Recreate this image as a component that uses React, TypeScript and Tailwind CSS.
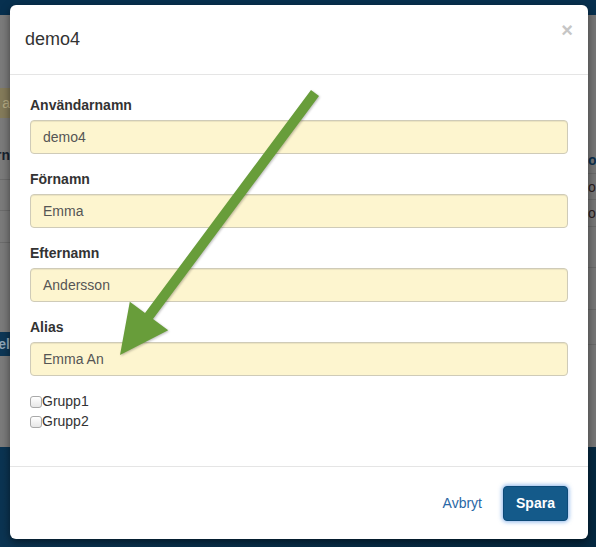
import React from 'react';

interface Field {
  label: string;
  value: string;
}

const fields: Field[] = [
  { label: 'Användarnamn', value: 'demo4' },
  { label: 'Förnamn', value: 'Emma' },
  { label: 'Efternamn', value: 'Andersson' },
  { label: 'Alias', value: 'Emma An' },
];

const groups = ['Grupp1', 'Grupp2'];

const Backdrop: React.FC = () => (
  <div className="flex flex-col h-full">
    <div className="h-[15px] bg-[#07304f]" />
    <div className="h-[432px] bg-[#7b7b7b] flex justify-between">
      {/* left edge of the page behind the modal */}
      <div className="w-[10px] overflow-hidden flex flex-col text-[14px] leading-[20px]">
        <div className="h-[73px]" />
        <div className="h-[30px] bg-[#847b5a] flex items-center justify-end text-[#b8ad84]">a</div>
        <div className="h-[62px] pt-[27px] flex justify-end font-bold text-[#17222e] border-b border-[#6c6c6c]">rn</div>
        <div className="h-[31px] border-b border-[#6c6c6c]" />
        <div className="h-[32px] border-b border-[#6c6c6c]" />
        <div className="h-[89px]" />
        <div className="h-[24px] bg-[#0d3756] flex items-center justify-end font-bold text-[#8fa6b8]">el</div>
      </div>
      {/* right edge */}
      <div className="w-[8px] overflow-hidden flex flex-col text-[14px] leading-[20px] bg-[#777]">
        <div className="h-[135px]" />
        <div className="h-[24px] font-bold text-[#0b2f4f] border-b border-[#6a6a6a] whitespace-nowrap">op</div>
        <div className="h-[26px] text-[#2a1c1c] border-b border-[#6a6a6a] flex items-center whitespace-nowrap">op</div>
        <div className="h-[27px] text-[#2a1c1c] border-b border-[#6a6a6a] flex items-center whitespace-nowrap">op</div>
        <div className="h-[41px] border-b border-[#6a6a6a]" />
        <div className="h-[42px] border-b border-[#6a6a6a]" />
        <div className="h-[35px] border-b border-[#6a6a6a]" />
      </div>
    </div>
    <div className="flex-1 bg-linear-to-r from-[#0b3452] to-[#052840]" />
  </div>
);

const Arrow: React.FC = () => (
  <svg
    className="absolute inset-0 pointer-events-none"
    width="596"
    height="547"
    viewBox="0 0 596 547"
    style={{ filter: 'drop-shadow(1px 1px 1px rgba(0,0,0,0.25))' }}
  >
    <polygon
      points="319,96 153,319 168.2,330.3 120,355 129.8,301.7 145,313 311,90"
      fill="#689d3a"
    />
  </svg>
);

export default function App() {
  return (
    <div className="relative w-[596px] h-[547px] overflow-hidden font-['Liberation_Sans',Arial,sans-serif]">
      <Backdrop />

      <div className="absolute left-[10px] top-[5px] w-[578px] bg-white rounded-[6px] shadow-[0_3px_9px_rgba(0,0,0,0.5)]">
        {/* Header */}
        <div className="h-[70px] px-[15px] flex items-start justify-between border-b border-[#e5e5e5]">
          <h4 className="mt-[21px] text-[18px] leading-[26px] text-[#333]">demo4</h4>
          <button
            type="button"
            className="mt-[15px] text-[20px] leading-[20px] font-bold text-[#c6c6c6]"
          >
            ×
          </button>
        </div>

        {/* Body */}
        <div className="px-[20px] py-[20px]">
          {fields.map((f) => (
            <div key={f.label} className="mb-[15px]">
              <label className="block mb-[5px] text-[14px] leading-[20px] font-bold text-[#333]">
                {f.label}
              </label>
              <div className="h-[34px] w-full flex items-center px-[12px] rounded-[4px] border border-[#cfcbb8] bg-[#fdf5cf] shadow-[inset_0_1px_1px_rgba(0,0,0,0.075)] text-[14px] text-[#555]">
                {f.value}
              </div>
            </div>
          ))}

          <div className="mb-[15px]">
            {groups.map((g) => (
              <label key={g} className="flex items-center h-[20px] text-[14px] text-[#333]">
                <span className="inline-block w-[12px] h-[12px] mt-[1px] rounded-[3px] border border-[#a9a9a9] bg-linear-to-b from-white to-[#e6e6e6]" />
                {g}
              </label>
            ))}
          </div>
        </div>

        {/* Footer */}
        <div className="border-t border-[#e5e5e5] pt-[19px] pb-[18px] px-[20px] flex items-center justify-end">
          <button type="button" className="px-[12px] h-[35px] text-[14px] text-[#2a68a6]">
            Avbryt
          </button>
          <button
            type="button"
            className="ml-[9px] w-[65px] h-[35px] rounded-[4px] border border-[#0c4a78] bg-[#145a8a] text-white text-[14px] font-bold shadow-[0_0_4px_1px_rgba(90,150,225,0.7)]"
          >
            Spara
          </button>
        </div>
      </div>

      <Arrow />
    </div>
  );
}
